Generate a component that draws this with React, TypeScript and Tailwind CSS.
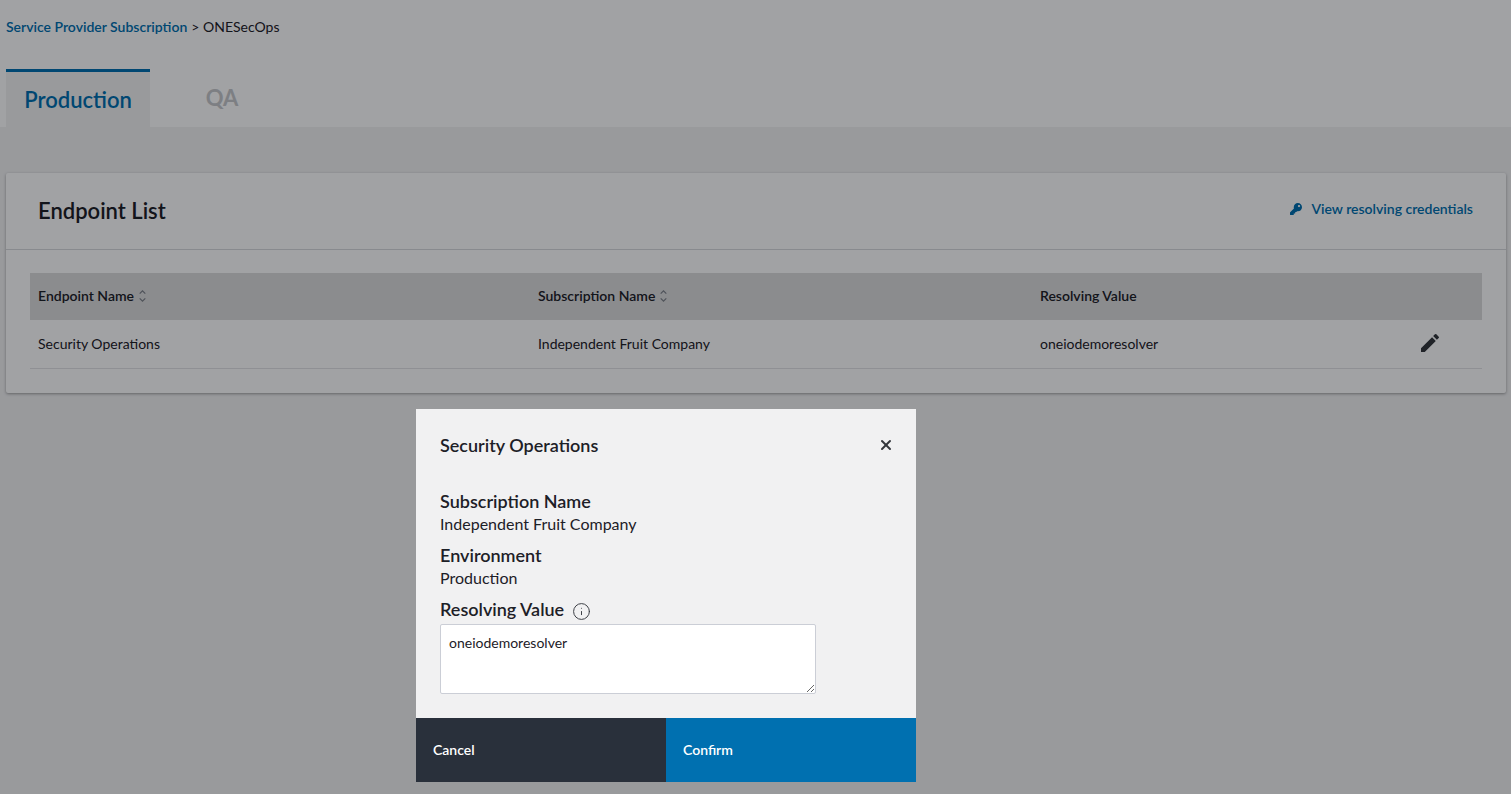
import { Info, X } from 'lucide-react';
import { FaKey } from 'react-icons/fa';
import { MdEdit } from 'react-icons/md';

const rows = [
  {
    endpoint: 'Security Operations',
    subscription: 'Independent Fruit Company',
    resolving: 'oneiodemoresolver',
  },
];

function SortIcon() {
  return (
    <svg viewBox="0 0 7 12" className="h-[12px] w-[7px] text-[#7d8188]" fill="none" stroke="currentColor" strokeWidth="1.2">
      <path d="M0.7 3.6 L3.5 0.9 L6.3 3.6" />
      <path d="M0.7 8.4 L3.5 11.1 L6.3 8.4" />
    </svg>
  );
}

function SortHeader({ label }: { label: string }) {
  return (
    <div className="flex items-center gap-[5px] font-semibold text-[#1d2027]">
      {label}
      <SortIcon />
    </div>
  );
}

function EndpointCard() {
  return (
    <section className="rounded-[2px] bg-white shadow-[0_1px_3px_rgba(0,0,0,0.35)]">
      <header className="flex h-[77px] items-center justify-between border-b border-[#d8d9dc] pl-[32px] pr-[33px]">
        <h2 className="pb-[2px] text-[22px] font-semibold text-[#1d2027]">Endpoint List</h2>
        <a className="flex items-center gap-[9px] pb-[5px] text-[14px] font-semibold text-[#0070b0]">
          <FaKey className="h-[12px] w-[12px]" />
          View resolving credentials
        </a>
      </header>
      <div className="px-[24px] pb-[24px] pt-[23px] text-[14px]">
        <div className="grid h-[47px] grid-cols-[500px_502px_1fr] items-center bg-[#dcdcdd] pb-[2px] pl-[8px]">
          <SortHeader label="Endpoint Name" />
          <SortHeader label="Subscription Name" />
          <div className="font-semibold text-[#1d2027]">Resolving Value</div>
        </div>
        {rows.map((row) => (
          <div
            key={row.endpoint}
            className="grid h-[49px] grid-cols-[500px_502px_1fr_auto] items-center border-b border-[#e2e3e6] pb-[2px] pl-[8px] pr-[40px] text-[#1d2027]"
          >
            <div>{row.endpoint}</div>
            <div>{row.subscription}</div>
            <div>{row.resolving}</div>
            <MdEdit className="h-[24px] w-[24px] text-[#33363c]" />
          </div>
        ))}
      </div>
    </section>
  );
}

function EndpointModal() {
  return (
    <div className="fixed inset-0 z-10 flex items-end justify-start bg-[#000308]/[0.37] pb-[12px] pl-[416px]">
      <div className="w-[500px] bg-[#f1f1f2] text-[#1d2027]">
        <div className="h-[309px] px-[24px] pt-[23px]">
          <div className="flex h-[26px] items-center justify-between">
            <h3 className="text-[18px] font-semibold">Security Operations</h3>
            <X className="-mr-[2px] h-[16px] w-[16px] text-[#33363c]" strokeWidth={3} />
          </div>
          <div className="mt-[32px] text-[18px] font-semibold leading-[22px]">Subscription Name</div>
          <div className="mt-[1px] text-[16px] leading-[22px]">Independent Fruit Company</div>
          <div className="mt-[9px] text-[18px] font-semibold leading-[22px]">Environment</div>
          <div className="mt-[1px] text-[16px] leading-[22px]">Production</div>
          <div className="mt-[9px] flex gap-[8px] text-[18px] font-semibold leading-[22px]">
            Resolving Value
            <Info className="mt-[4px] h-[19px] w-[19px] text-[#3c3f45]" strokeWidth={1.25} />
          </div>
          <textarea
            className="mt-[3px] block h-[70px] w-[376px] rounded-[2px] border border-[#cbced6] bg-white px-[8px] py-[8px] text-[14px] leading-[20px] outline-none"
            defaultValue="oneiodemoresolver"
          />
        </div>
        <div className="flex h-[64px] text-[14px] font-semibold text-white">
          <button className="w-[250px] bg-[#29303b] pb-[1px] pl-[17px] text-left">Cancel</button>
          <button className="w-[250px] bg-[#0070b0] pb-[1px] pl-[17px] text-left">Confirm</button>
        </div>
      </div>
    </div>
  );
}

export default function App() {
  return (
    <div className="h-screen overflow-hidden bg-[#f2f2f3] font-['Lato',sans-serif]">
      <div className="h-[127px] bg-white px-[6px]">
        <nav className="flex h-[69px] items-start pt-[18px] text-[14px] leading-[18px]">
          <a className="font-semibold text-[#0070b0]">Service Provider Subscription</a>
          <span className="ml-[4px] text-[#1d2027]">&gt; ONESecOps</span>
        </nav>
        <div className="flex h-[58px]">
          <div className="flex w-[144px] items-center justify-center border-t-[3px] border-[#0070b0] bg-[#f2f2f3] text-[22px] font-semibold text-[#0070b0]">
            Production
          </div>
          <div className="flex w-[144px] items-center justify-center pb-[2px] text-[22px] font-bold text-[#c6c8cb]">
            QA
          </div>
        </div>
      </div>
      <div className="pl-[6px] pr-[5px] pt-[46px]">
        <EndpointCard />
      </div>
      <EndpointModal />
    </div>
  );
}
